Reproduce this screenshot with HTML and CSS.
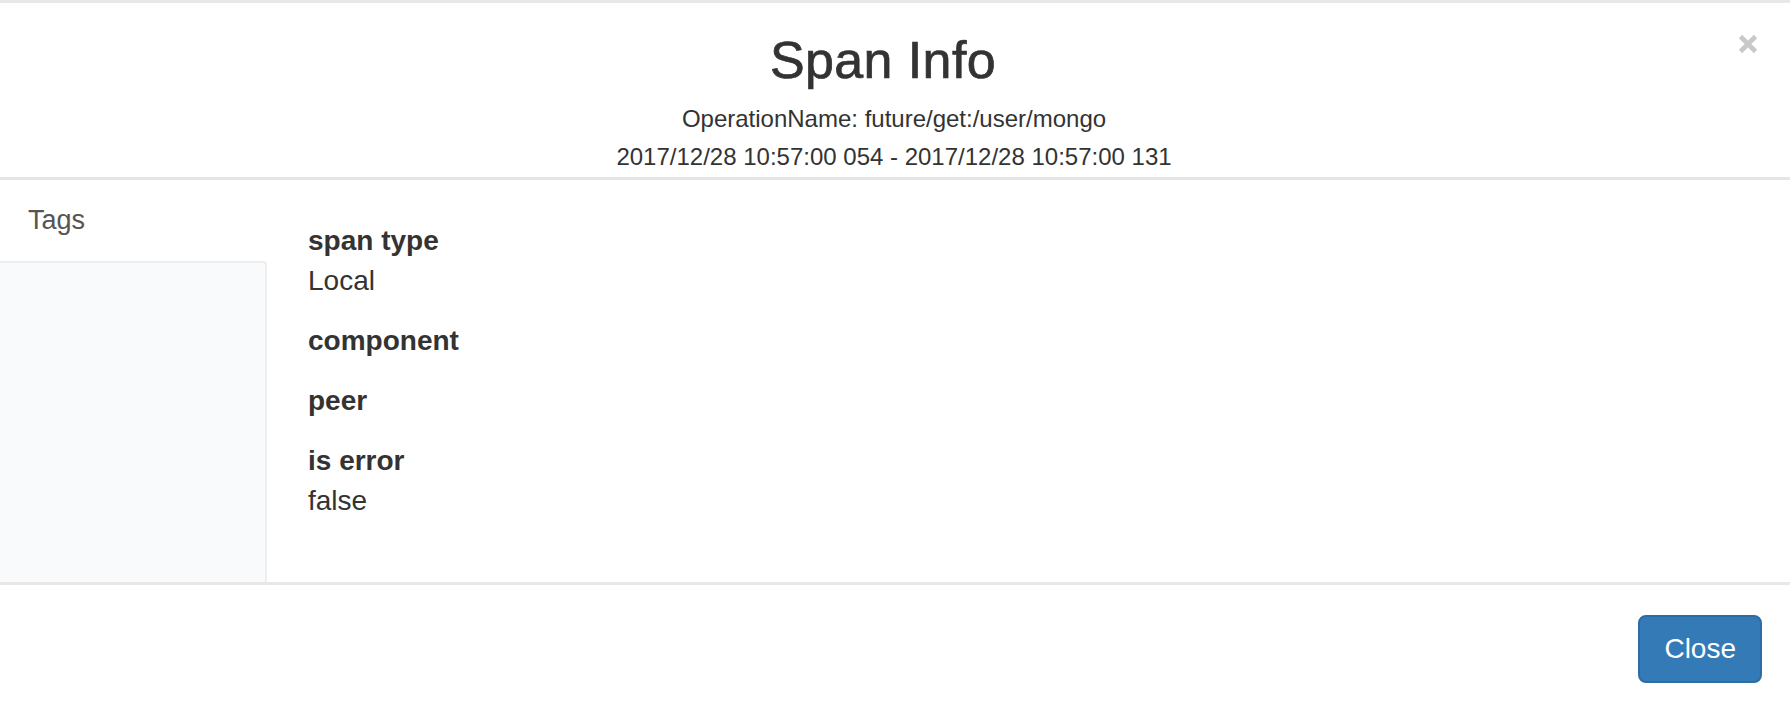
FILE: index.html
```html
<!DOCTYPE html>
<html lang="en">
<head>
<meta charset="utf-8">
<title>Span Info</title>
<link rel="stylesheet" href="styles.css">
</head>
<body>
<div class="modal">
  <div class="modal-header">
    <button class="close" type="button" aria-label="Close">
      <svg width="20" height="20" viewBox="0 0 20 20" aria-hidden="true">
        <path d="M2.5 2.5 L17.5 17.5 M17.5 2.5 L2.5 17.5" stroke="#c9c9c9" stroke-width="4.6" fill="none"/>
      </svg>
    </button>
    <h3 class="modal-title">Span Info</h3>
    <div class="meta">OperationName: future/get:/user/mongo</div>
    <div class="meta">2017/12/28 10:57:00 054 - 2017/12/28 10:57:00 131</div>
  </div>
  <div class="modal-body">
    <div class="side">
      <div class="tab">Tags</div>
      <div class="side-fill"></div>
    </div>
    <div class="content">
      <div class="item">
        <div class="label">span type</div>
        <div class="value">Local</div>
      </div>
      <div class="item">
        <div class="label">component</div>
      </div>
      <div class="item">
        <div class="label">peer</div>
      </div>
      <div class="item">
        <div class="label">is error</div>
        <div class="value">false</div>
      </div>
    </div>
  </div>
  <div class="modal-footer">
    <button class="btn" type="button">Close</button>
  </div>
</div>
</body>
</html>
```

FILE: styles.css
```css
html, body {
  margin: 0;
  padding: 0;
  background: #fff;
}

body {
  font-family: "Liberation Sans", Helvetica, Arial, sans-serif;
  color: #333;
  font-size: 28px;
  line-height: 40px;
}

.modal {
  border-top: 3px solid #e8e8e8;
  background: #fff;
}

.modal-header {
  padding: 30px 32px 1px 30px;
  border-bottom: 3px solid #e5e5e5;
  text-align: center;
}

.close {
  float: right;
  width: 22px;
  height: 24px;
  margin-top: 1px;
  padding: 0;
  border: 0;
  background: transparent;
  display: flex;
  justify-content: flex-end;
  cursor: pointer;
}

.close svg {
  display: block;
}

.modal-title {
  margin: 0 0 12px 0;
  font-size: 52px;
  line-height: 55px;
  font-weight: normal;
  letter-spacing: 0.4px;
  -webkit-text-stroke: 0.7px #333;
  color: #333;
}

.meta {
  font-size: 24px;
  line-height: 38px;
  color: #333;
}

.modal-body {
  display: flex;
  align-items: stretch;
}

.side {
  width: 267px;
  flex: none;
  display: flex;
  flex-direction: column;
}

.tab {
  height: 81px;
  box-sizing: border-box;
  padding: 22px 0 0 28px;
  font-size: 27px;
  line-height: 37px;
  color: #555;
}

.side-fill {
  flex: 1;
  background: #f9fafb;
  border-top: 2px solid #eceef0;
  border-right: 2px solid #eceef0;
  border-top-right-radius: 4px;
}

.content {
  flex: 1;
  padding: 41px 40px 61px 41px;
}

.item {
  margin-bottom: 20px;
}

.item:last-child {
  margin-bottom: 0;
}

.label {
  font-weight: bold;
}

.value {
  font-weight: normal;
}

.modal-footer {
  border-top: 3px solid #e8e8e8;
  padding: 30px 28px 30px 30px;
  display: flex;
  justify-content: flex-end;
}

.btn {
  font-family: "Liberation Sans", Helvetica, Arial, sans-serif;
  font-size: 28px;
  line-height: 40px;
  padding: 12px 24px;
  color: #fff;
  background: #337ab7;
  border: 2px solid #2e6da4;
  border-radius: 8px;
  cursor: pointer;
}
```
